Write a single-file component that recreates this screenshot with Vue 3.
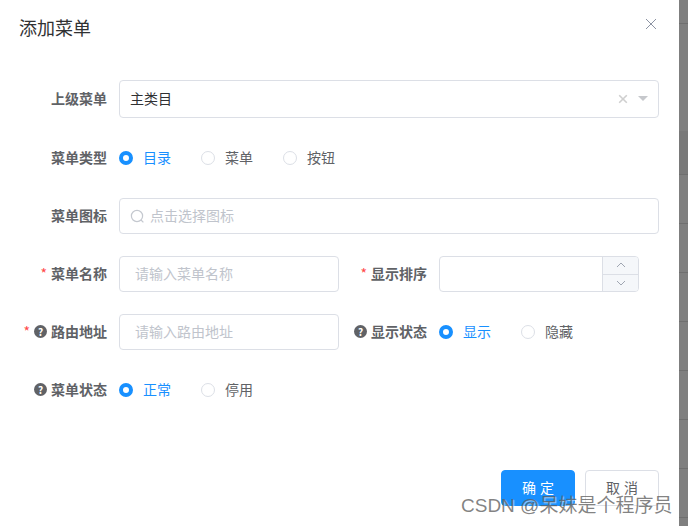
<script setup>
const required = '*'
</script>

<template>
  <div class="screen">
    <div class="dialog">
      <header class="head">
        <span class="title">添加菜单</span>
        <svg class="close" width="12" height="12" viewBox="0 0 12 12"><path d="M1 1l10 10M11 1L1 11" stroke="#8c93a3" stroke-width="1" fill="none" /></svg>
      </header>
      <div class="form">
        <div class="row tall">
          <div class="item full">
            <label class="label">上级菜单</label>
            <div class="box select">
              <span class="value">主类目</span>
              <svg class="clear" width="10" height="10" viewBox="0 0 10 10"><path d="M1.2 1.2l7.6 7.6M8.8 1.2L1.2 8.8" stroke="#cfcfcf" stroke-width="1.6" fill="none" /></svg>
              <span class="caret"></span>
            </div>
          </div>
        </div>
        <div class="row wide">
          <div class="item full">
            <label class="label">菜单类型</label>
            <div class="radios">
              <span class="radio on"><i class="dot"></i>目录</span>
              <span class="radio"><i class="dot"></i>菜单</span>
              <span class="radio"><i class="dot"></i>按钮</span>
            </div>
          </div>
        </div>
        <div class="row">
          <div class="item full">
            <label class="label">菜单图标</label>
            <div class="box search">
              <svg width="15" height="15" viewBox="0 0 15 15"><circle cx="7" cy="7" r="5.6" stroke="#c4c8cf" stroke-width="1.2" fill="none" /><path d="M11 11l2.4 2.4" stroke="#c4c8cf" stroke-width="1.2" /></svg>
              <span class="placeholder">点击选择图标</span>
            </div>
          </div>
        </div>
        <div class="row">
          <div class="item half">
            <label class="label"><em>{{ required }}</em>菜单名称</label>
            <div class="box text"><span class="placeholder">请输入菜单名称</span></div>
          </div>
          <div class="item half">
            <label class="label"><em>{{ required }}</em>显示排序</label>
            <div class="box number">
              <div class="steps">
                <span class="step"><svg width="10" height="6" viewBox="0 0 10 6"><path d="M1 5l4-4 4 4" stroke="#a0a6b2" fill="none" /></svg></span>
                <span class="step"><svg width="10" height="6" viewBox="0 0 10 6"><path d="M1 1l4 4 4-4" stroke="#a0a6b2" fill="none" /></svg></span>
              </div>
            </div>
          </div>
        </div>
        <div class="row">
          <div class="item half">
            <label class="label"><em>{{ required }}</em><i class="help">?</i>路由地址</label>
            <div class="box text"><span class="placeholder">请输入路由地址</span></div>
          </div>
          <div class="item half">
            <label class="label"><i class="help">?</i>显示状态</label>
            <div class="radios">
              <span class="radio on"><i class="dot"></i>显示</span>
              <span class="radio"><i class="dot"></i>隐藏</span>
            </div>
          </div>
        </div>
        <div class="row">
          <div class="item full">
            <label class="label"><i class="help">?</i>菜单状态</label>
            <div class="radios">
              <span class="radio on"><i class="dot"></i>正常</span>
              <span class="radio"><i class="dot"></i>停用</span>
            </div>
          </div>
        </div>
      </div>
      <footer class="foot">
        <button class="btn primary">确 定</button>
        <button class="btn">取 消</button>
      </footer>
      <div class="mark">CSDN @呆妹是个程序员</div>
    </div>
    <div class="band"></div>
  </div>
</template>

<style>
html, body { margin: 0; background: #7f7f7f; }
</style>

<style scoped>
.screen { display: flex; width: 688px; height: 526px; overflow: hidden; background: #7f7f7f; font-family: "Noto Sans CJK SC", "Liberation Sans", sans-serif; }
.dialog { position: relative; flex: none; width: 679px; height: 526px; background: #fff; display: flex; flex-direction: column; }
.band {
  flex: 1;
  background-color: #7f7f7f;
  background-image:
    linear-gradient(#6f6f6f, #6f6f6f),
    linear-gradient(rgba(0, 0, 0, 0.05), rgba(0, 0, 0, 0.05)),
    repeating-linear-gradient(to bottom, #6f6f6f 0, #6f6f6f 1px, transparent 1px, transparent 49px);
  background-repeat: no-repeat;
  background-size: 100% 1px, 100% 43px, 100% 352px;
  background-position: 0 23px, 0 131px, 0 174px;
}
.head { height: 56px; display: flex; justify-content: space-between; align-items: center; padding: 0 22px 0 19px; }
.title { font-size: 18px; line-height: 24px; color: #303133; margin-top: -2px; }
.close { margin-top: -8px; }
.form { padding-top: 24px; display: flex; flex-direction: column; }
.row { display: flex; height: 36px; margin-bottom: 22px; }
.tall { height: 38px; margin-bottom: 20px; }
.wide { height: 40px; margin-bottom: 20px; }
.item { display: flex; align-items: center; }
.full { width: 659px; }
.half { width: 339px; }
.half + .half { width: 300px; }
.label { box-sizing: content-box; width: 107px; padding: 0 12px 2px 0; flex: none; display: flex; justify-content: flex-end; align-items: center; font-size: 14px; line-height: 20px; font-weight: 700; color: #606266; }
.half + .half .label { width: 88px; }
.label em { color: #ff4949; font-style: normal; font-weight: 400; margin-right: 4px; }
.help { width: 13px; height: 13px; border-radius: 50%; background: #606266; color: #fff; font-size: 10px; font-style: normal; line-height: 13px; text-align: center; margin-right: 4px; }
.box { box-sizing: border-box; flex: 1; height: 100%; border: 1px solid #dcdfe6; border-radius: 4px; display: flex; align-items: center; font-size: 14px; line-height: 20px; }
.select { padding: 0 10px; color: #303133; }
.value { flex: 1; margin-top: -3px; }
.clear { margin: 0 10px 0 0; }
.caret { width: 0; height: 0; border: 5px solid transparent; border-top: 5px solid #c6c8cc; border-bottom: 0; margin-top: -1px; }
.search { padding-left: 10px; gap: 5px; }
.text { padding-left: 15px; }
.placeholder { color: #c0c4cc; margin-top: -2px; }
.number { justify-content: flex-end; overflow: hidden; width: 200px; flex: none; }
.steps { box-sizing: border-box; width: 36px; height: 100%; border-left: 1px solid #dcdfe6; background: #f5f7fa; display: flex; flex-direction: column; }
.step { flex: 1; display: flex; align-items: center; justify-content: center; }
.step + .step { border-top: 1px solid #dcdfe6; }
.radios { display: flex; }
.radio { width: 82px; display: flex; align-items: center; padding-bottom: 2px; font-size: 14px; line-height: 20px; color: #606266; }
.radio.on { color: #1890ff; }
.dot { box-sizing: border-box; width: 14px; height: 14px; border-radius: 50%; border: 1px solid #dcdfe6; margin: 2px 10px 0 0; }
.on .dot { border: 4.5px solid #1890ff; }
.foot { position: absolute; top: 470px; right: 20px; display: flex; gap: 10px; }
.btn { width: 74px; height: 36px; box-sizing: border-box; border: 1px solid #dcdfe6; border-radius: 4px; background: #fff; color: #606266; font: 14px "Noto Sans CJK SC", sans-serif; padding: 0 0 3px; word-spacing: 1px; }
.primary { background: #1890ff; border-color: #1890ff; color: #fff; }
.mark { position: absolute; left: 461px; top: 494px; font-size: 19px; line-height: 24px; white-space: nowrap; color: rgba(90, 90, 90, 0.75); text-shadow: 1px 1px 1px rgba(255, 255, 255, 0.6); font-family: "Liberation Sans", "Noto Sans CJK SC", sans-serif; }
</style>
